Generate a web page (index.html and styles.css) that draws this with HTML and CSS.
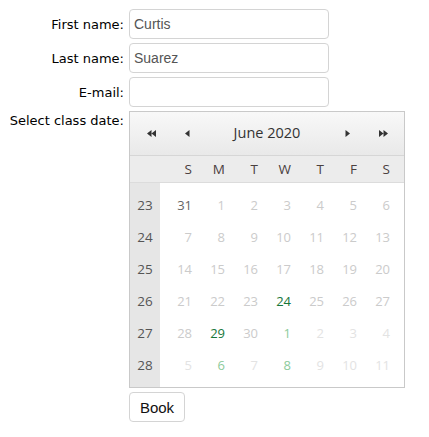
FILE: index.html
```html
<!DOCTYPE html>
<html lang="en">
  <head>
    <meta charset="UTF-8" />
    <meta name="viewport" content="width=device-width, initial-scale=1.0" />
    <title>Book a class</title>
    <link rel="stylesheet" href="styles.css">
  </head>
  <body>
    <form class="booking" onsubmit="event.preventDefault();">
      <label class="field-label" for="first">First name:</label>
      <input class="field" type="text" id="first" value="Curtis" />

      <label class="field-label" for="last">Last name:</label>
      <input class="field" type="text" id="last" value="Suarez" />

      <label class="field-label" for="email">E-mail:</label>
      <input class="field" type="email" id="email" />

      <span class="field-label top">Select class date:</span>
      <div class="calendar">
        <div class="cal-nav">
          <span class="nav-btn">
            <svg width="9" height="7" viewBox="0 0 9 7"><path d="M0 3.5L4.5 0v7z M4.5 3.5L9 0v7z" fill="#333"/></svg>
          </span>
          <span class="nav-btn">
            <svg width="5" height="7" viewBox="0 0 5 7"><path d="M0 3.5L4.5 0v7z" fill="#333"/></svg>
          </span>
          <span class="cal-title">June 2020</span>
          <span class="nav-btn">
            <svg width="5" height="7" viewBox="0 0 5 7"><path d="M5 3.5L0.5 0v7z" fill="#333"/></svg>
          </span>
          <span class="nav-btn">
            <svg width="9" height="7" viewBox="0 0 9 7"><path d="M4.5 3.5L0 0v7z M9 3.5L4.5 0v7z" fill="#333"/></svg>
          </span>
        </div>

        <div class="cal-head">
          <span></span>
          <span>S</span><span>M</span><span>T</span><span>W</span><span>T</span><span>F</span><span>S</span>
        </div>

        <div class="cal-body">
          <span class="wk">23</span>
          <span class="d prev">31</span><span class="d past">1</span><span class="d past">2</span><span class="d past">3</span><span class="d past">4</span><span class="d past">5</span><span class="d past">6</span>

          <span class="wk">24</span>
          <span class="d past">7</span><span class="d past">8</span><span class="d past">9</span><span class="d past">10</span><span class="d past">11</span><span class="d past">12</span><span class="d past">13</span>

          <span class="wk">25</span>
          <span class="d past">14</span><span class="d past">15</span><span class="d past">16</span><span class="d past">17</span><span class="d past">18</span><span class="d past">19</span><span class="d past">20</span>

          <span class="wk">26</span>
          <span class="d past">21</span><span class="d past">22</span><span class="d past">23</span><span class="d open">24</span><span class="d past">25</span><span class="d past">26</span><span class="d past">27</span>

          <span class="wk">27</span>
          <span class="d past">28</span><span class="d open">29</span><span class="d past">30</span><span class="d next-open">1</span><span class="d next">2</span><span class="d next">3</span><span class="d next">4</span>

          <span class="wk">28</span>
          <span class="d next">5</span><span class="d next-open">6</span><span class="d next">7</span><span class="d next-open">8</span><span class="d next">9</span><span class="d next">10</span><span class="d next">11</span>
        </div>
      </div>

      <span></span>
      <div>
        <button type="submit" class="book-btn">Book</button>
      </div>
    </form>
  </body>
</html>
```

FILE: styles.css
```css
body {
  margin: 0;
  padding: 9px 8px;
  background-color: #fff;
  font-family: "DejaVu Sans", Verdana, sans-serif;
  font-size: 13px;
  color: #000;
}
.booking {
  display: grid;
  grid-template-columns: 116px 276px;
  column-gap: 5px;
  row-gap: 4px;
  align-items: center;
}
.field-label {
  text-align: right;
  white-space: nowrap;
}
.field-label.top {
  align-self: start;
  padding-top: 2px;
}
.field {
  box-sizing: border-box;
  width: 200px;
  height: 30px;
  padding: 0 4px;
  border: 1px solid #d4d4d4;
  border-radius: 4px;
  font-family: "Liberation Sans", Arial, sans-serif;
  font-size: 14px;
  color: #555;
}
.calendar {
  box-sizing: border-box;
  width: 276px;
  border: 1px solid #c9c9c9;
  font-family: "Open Sans", sans-serif;
  font-size: 13px;
}
.cal-nav {
  display: grid;
  grid-template-columns: 42px 30px 1fr 30px 42px;
  align-items: center;
  height: 43px;
  background: linear-gradient(#f8f8f8, #e9e9e9);
  border-bottom: 1px solid #d6d6d6;
}
.nav-btn {
  display: flex;
  justify-content: center;
  align-items: center;
}
.cal-title {
  text-align: center;
  color: #333;
  font-size: 14.5px;
  padding-bottom: 3px;
}
.cal-head,
.cal-body {
  display: grid;
  grid-template-columns: 30px repeat(7, 33px);
}
.cal-head {
  height: 26px;
  align-items: center;
  background-color: #ececec;
  border-bottom: 1px solid #dcdcdc;
  color: #4a4040;
  font-size: 13.5px;
}
.cal-head span {
  text-align: right;
  padding-right: 1px;
}
.cal-body {
  padding: 6px 0;
  background: linear-gradient(to right, #e6e6e6 30px, #fff 30px);
  grid-auto-rows: 32px;
  align-items: center;
}
.wk {
  text-align: center;
  color: #555;
  font-size: 13.5px;
}
.d {
  text-align: right;
  padding-right: 1px;
}
.prev {
  color: #666;
}
.past {
  color: #cbcbcb;
}
.next {
  color: #e3e3e3;
}
.open {
  color: #17773a;
}
.next-open {
  color: #8ccb9b;
}
.book-btn {
  box-sizing: border-box;
  width: 56px;
  height: 30px;
  background-color: #fff;
  border: 1px solid #d4d4d4;
  border-radius: 4px;
  font-family: "Liberation Sans", Arial, sans-serif;
  font-size: 15px;
  color: #111;
}
```
